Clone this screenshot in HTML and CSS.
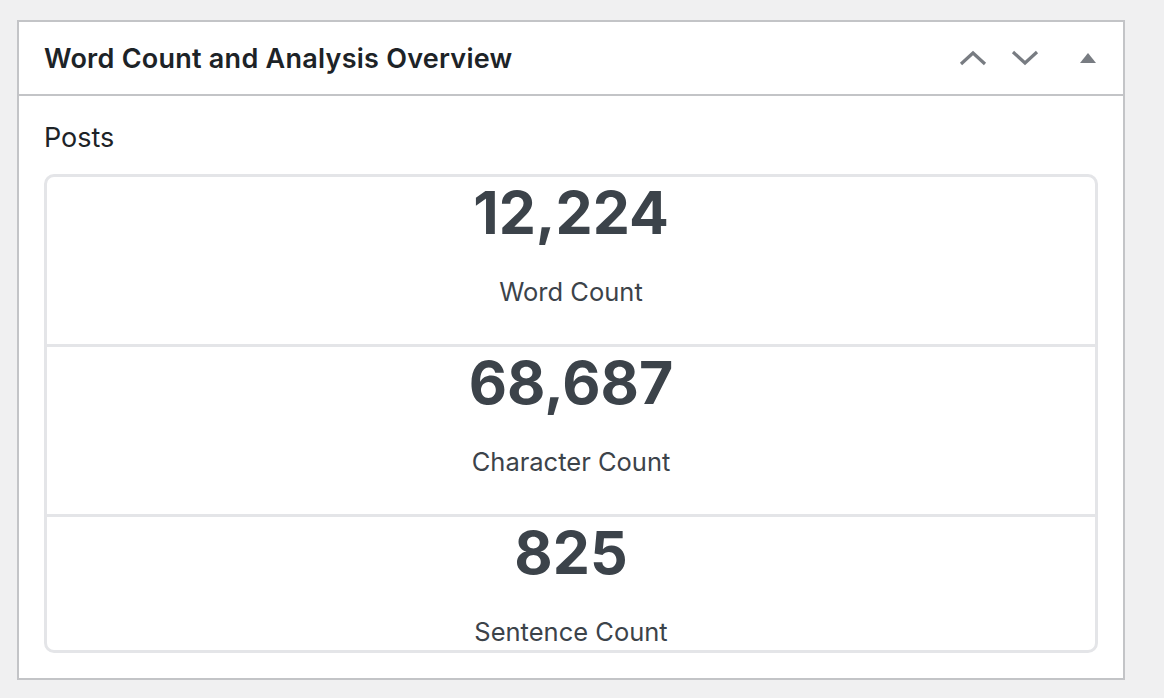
FILE: index.html
```html
<!DOCTYPE html>
<html lang="en">
<head>
    <meta charset="UTF-8">
    <title>Word Count and Analysis Overview</title>
    <link rel="stylesheet" href="styles.css">
</head>
<body>
<div class="postbox">
    <div class="postbox-header">
        <h2 class="hndle">Word Count and Analysis Overview</h2>
        <div class="handle-actions">
            <button class="handle-btn" aria-label="Move up">
                <svg width="28" height="16" viewBox="0 0 28 16"><path d="M2 14 L14 3 L26 14" fill="none" stroke="#787c82" stroke-width="3.2"/></svg>
            </button>
            <button class="handle-btn" aria-label="Move down">
                <svg width="28" height="16" viewBox="0 0 28 16"><path d="M2 2 L14 13 L26 2" fill="none" stroke="#787c82" stroke-width="3.2"/></svg>
            </button>
            <button class="handle-btn toggle" aria-label="Toggle panel">
                <svg width="18" height="12" viewBox="0 0 18 12"><path d="M9 1 L17 11 L1 11 Z" fill="#787c82"/></svg>
            </button>
        </div>
    </div>
    <div class="inside">
        <h3 class="section-title">Posts</h3>
        <ul class="stats">
            <li class="stat">
                <span class="stat-value">12,224</span>
                <span class="stat-label">Word Count</span>
            </li>
            <li class="stat">
                <span class="stat-value">68,687</span>
                <span class="stat-label">Character Count</span>
            </li>
            <li class="stat">
                <span class="stat-value">825</span>
                <span class="stat-label">Sentence Count</span>
            </li>
        </ul>
    </div>
</div>
</body>
</html>
```

FILE: styles.css
```css
* {
    padding: 0;
    margin: 0;
    box-sizing: border-box;
}

ul {
    list-style: none;
}

body {
    background-color: #f0f0f1;
    font-family: Inter, "Noto Sans", sans-serif;
    color: #1d2327;
    padding: 20px 0 0 17px;
}

.postbox {
    width: 1108px;
    height: 660px;
    background-color: #fff;
    border: 2px solid #c3c4c7;
}

.postbox-header {
    height: 74px;
    border-bottom: 2px solid #c3c4c7;
    display: flex;
    align-items: center;
    justify-content: space-between;
    padding: 0 26px 0 25px;
}

.postbox-header .hndle {
    font-size: 27px;
    font-weight: 600;
    color: #1d2327;
    letter-spacing: 0.25px;
}

.handle-actions {
    display: flex;
    align-items: center;
}

.handle-btn {
    border: 0;
    background-color: transparent;
    cursor: pointer;
    display: flex;
    align-items: center;
    margin-left: 24px;
}

.handle-btn.toggle {
    margin-left: 40px;
}

.inside {
    padding: 27px 25px 0;
}

.section-title {
    font-size: 27px;
    font-weight: 400;
    line-height: 30px;
    color: #1d2327;
    margin-bottom: 21px;
}

.stats {
    height: 479px;
    border: 3px solid #e4e5e8;
    border-radius: 10px;
    overflow: hidden;
}

.stat {
    display: flex;
    flex-direction: column;
    align-items: center;
    padding-bottom: 37px;
}

.stat + .stat {
    border-top: 3px solid #e4e5e8;
}

.stat-value {
    font-size: 59px;
    font-weight: 700;
    line-height: 72px;
    color: #3c434a;
}

.stat-label {
    font-size: 25.5px;
    line-height: 30px;
    margin-top: 28px;
    color: #3c434a;
}
```
